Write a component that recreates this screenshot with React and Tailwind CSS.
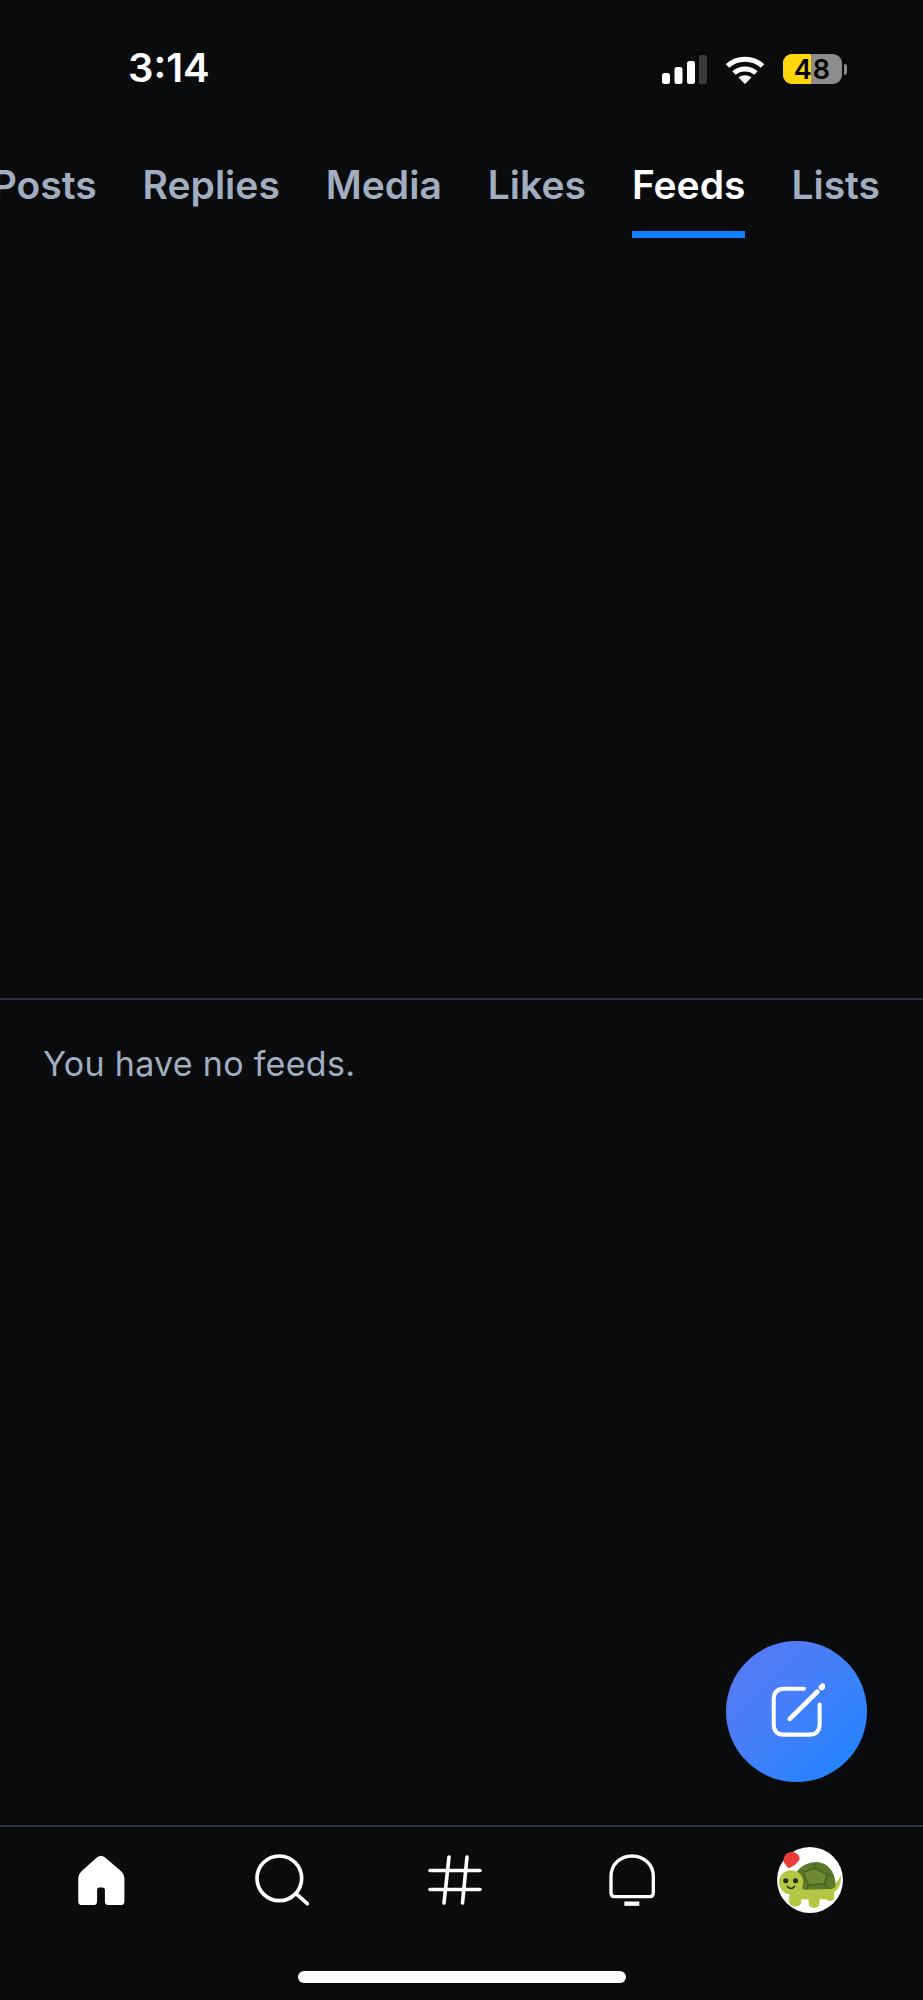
const TABS = ["Posts", "Replies", "Media", "Likes", "Feeds", "Lists"];

// ── Status bar glyphs ─────────────────────────────────────────────────────────

const SignalIcon = () => (
	<svg width="45" height="29" viewBox="0 0 45 29" fill="#fff">
		<rect x="0" y="18" width="8" height="11" rx="2.5" />
		<rect x="12.5" y="12" width="8" height="17" rx="2.5" />
		<rect x="25" y="6" width="8" height="23" rx="2.5" />
		<rect x="37" y="0" width="8" height="29" rx="2.5" fill="#3a3b3d" />
	</svg>
);

const WifiIcon = () => (
	<svg width="40" height="29" viewBox="0 0 40 29" fill="none" stroke="#fff" strokeWidth="5">
		<path d="M2.5 11 C12 2 28 2 37.5 11" />
		<path d="M9 18 C15 12.5 25 12.5 31 18" />
		<path d="M20 29 L13.5 22.5 C17 19.5 23 19.5 26.5 22.5 Z" fill="#fff" stroke="none" />
	</svg>
);

const Battery = () => (
	<div className="flex items-center gap-[2px]">
		<div className="relative h-[30px] w-[59px] overflow-hidden rounded-[9px] bg-[#8c8c8e]">
			<div className="h-full w-[28px] bg-[#ffd60a]" />
			<span className="absolute inset-0 flex items-center justify-center text-[27px] font-semibold leading-none tracking-[1px] text-black">
				48
			</span>
		</div>
		<div className="h-[11px] w-[3px] rounded-r-full bg-[#8c8c8e]" />
	</div>
);

// ── Nav icons ─────────────────────────────────────────────────────────────────

const HomeIcon = () => (
	<svg width="50" height="52" viewBox="225 135 150 160" fill="#fff">
		<path d="M288 145 Q300 135 312 145 L362 188 Q372 197 372 208 L372 280 Q372 292 360 292 L324 292 Q312 292 312 280 L312 246 Q312 238 304 238 L296 238 Q288 238 288 246 L288 280 Q288 292 276 292 L242 292 Q230 292 230 280 L230 208 Q230 197 240 188 Z" />
	</svg>
);

const SearchIcon = () => (
	<svg width="56" height="54" viewBox="756 130 168 162" fill="none" stroke="#fff" strokeLinecap="round" strokeWidth="11" className="ml-[7px]">
		<circle cx="835" cy="206" r="67" />
		<path d="M885 252 L919 282" />
	</svg>
);

const HashIcon = () => (
	<svg width="54" height="50" viewBox="0 0 54 50" fill="none" stroke="#fff" strokeLinecap="round" strokeWidth="3.6">
		<path d="M2 15.5 H52" />
		<path d="M2 34.5 H52" />
		<path d="M21 2 L16 48" />
		<path d="M39 2 L34.5 48" />
	</svg>
);

const BellIcon = () => (
	<svg width="48" height="53" viewBox="446 130 144 159" fill="none" stroke="#fff" strokeWidth="10">
		<path d="M455 244 L455 198 C455 160 484 136 518 136 C552 136 582 160 582 198 L582 244 Q582 258 572 258 L464 258 Q455 258 455 244 Z" strokeLinejoin="round" />
		<path d="M495 279 H540" strokeWidth="13" />
	</svg>
);

const ComposeIcon = () => (
	<svg width="57" height="57" viewBox="173 188 170 170" fill="none" stroke="#fff" strokeLinecap="round" strokeWidth="12">
		<path d="M280 205 H222 Q190 205 190 237 L190 310 Q190 342 222 342 L295 342 Q327 342 327 310 L327 252" />
		<path d="M238 295 L320 214" strokeWidth="14" />
		<path d="M333 201 L336 198" strokeWidth="18" />
	</svg>
);

// turtle emoji avatar
const Avatar = () => (
	<svg width="66" height="66" viewBox="52 37 196 196" className="ml-[3px]">
		<circle cx="150" cy="135" r="98" fill="#fff" />
		<path d="M72 82 C68 64 82 52 96 52 C110 52 120 62 119 74 C110 88 100 94 86 100 Z" fill="#ea3b3b" />
		<path d="M208 158 C225 150 234 138 241 122 C244 140 238 160 222 172 Z" fill="#b4c742" />
		<rect x="90" y="150" width="130" height="42" rx="20" fill="#b4c742" />
		<rect x="88" y="170" width="36" height="44" rx="15" fill="#b4c742" />
		<rect x="146" y="180" width="32" height="38" rx="15" fill="#b4c742" />
		<rect x="196" y="165" width="26" height="32" rx="12" fill="#b4c742" />
		<path d="M106 118 C120 92 150 80 176 82 C208 86 226 118 226 148 C226 158 218 162 208 162 L140 164 C118 164 102 140 106 118 Z" fill="#5c7a2b" />
		<path d="M130 112 L164 100 L200 118 L194 146 L146 150 Z" fill="#6d8a33" stroke="#4c6520" strokeWidth="5" />
		<path d="M164 100 L166 84 M200 118 L218 124 M194 146 L202 160 M146 150 L140 162" stroke="#4c6520" strokeWidth="5" />
		<circle cx="94" cy="142" r="36" fill="#b4c742" />
		<circle cx="78" cy="137" r="7.5" fill="#2a2d14" />
		<circle cx="107" cy="137" r="7.5" fill="#2a2d14" />
		<path d="M83 154 Q93 166 104 154" fill="none" stroke="#2a2d14" strokeWidth="4.5" strokeLinecap="round" />
	</svg>
);

// ── Page ──────────────────────────────────────────────────────────────────────

const App = () => {
	const navIcons = [
		<HomeIcon key="home" />,
		<SearchIcon key="search" />,
		<HashIcon key="hash" />,
		<BellIcon key="bell" />,
		<Avatar key="avatar" />,
	];

	return (
		<div className="relative flex h-[2000px] w-[923px] flex-col overflow-hidden bg-[#090b0d] font-['Inter',sans-serif]">
			{/* ── Status bar ── */}
			<div className="flex h-[90px] items-end justify-between pl-[128px] pr-[76px]">
				<span className="text-[40px] font-semibold leading-[44px] text-white">3:14</span>
				<div className="flex items-center gap-[18px] pb-[6px]">
					<SignalIcon />
					<WifiIcon />
					<Battery />
				</div>
			</div>

			{/* ── Tabs ── */}
			<div className="mt-[72px] flex items-start justify-end gap-[46px] overflow-hidden pr-[43px]">
				{TABS.map((tab) => {
					const isActive = tab === "Feeds";
					return (
						<div key={tab} className="flex shrink-0 flex-col items-center">
							<span
								className={[
									"text-[39px] font-semibold leading-[46px]",
									isActive ? "text-white" : "text-[#a0aec0]",
								].join(" ")}
							>
								{tab}
							</span>
							<div className={isActive ? "mt-[23px] h-[7px] w-[113px] bg-[#0f7fff]" : "mt-[23px] h-[7px] w-full"} />
						</div>
					);
				})}
			</div>

			{/* ── Empty state ── */}
			<div className="mt-[760px] h-[2px] bg-[#2b303a]" />
			<p className="pl-[43px] pt-[44px] text-[34px] leading-[40px] tracking-[0.3px] text-[#a0aec0]">
				You have no feeds.
			</p>
			<div className="flex-1" />

			{/* ── Bottom nav ── */}
			<div className="h-[175px] border-t-2 border-[#2b3442]">
				<div className="flex h-[88px] items-center pl-[12px] pt-[18px]">
					{navIcons.map((icon, i) => (
						<div key={i} className="flex w-[177px] justify-center">
							{icon}
						</div>
					))}
				</div>
				<div className="mt-[56px] flex justify-center">
					<div className="h-[12px] w-[328px] rounded-full bg-white" />
				</div>
			</div>

			{/* ── FAB ── */}
			<div className="absolute left-[726px] top-[1641px] flex h-[141px] w-[141px] items-center justify-center rounded-full bg-gradient-to-br from-[#5b79f6] to-[#0a85ff]">
				<ComposeIcon />
			</div>
		</div>
	);
};

export default App;
